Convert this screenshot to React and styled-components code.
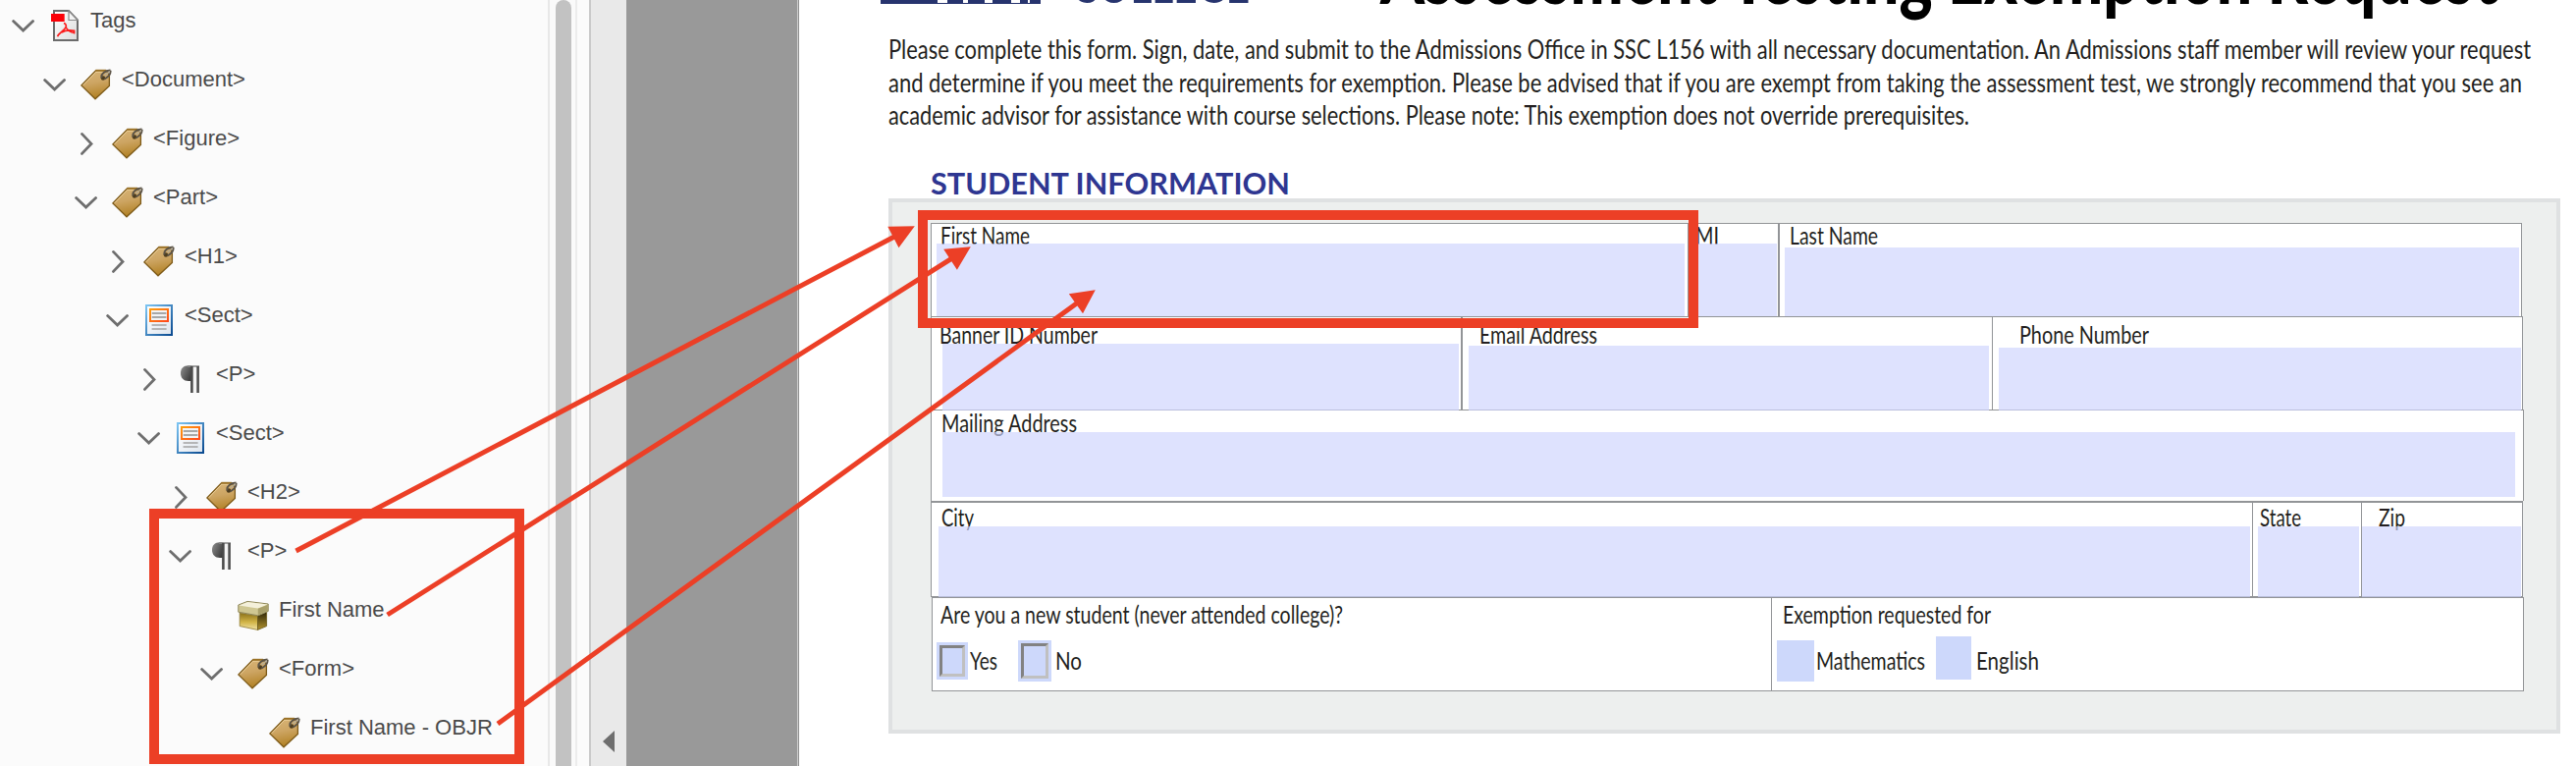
import React, { useLayoutEffect, useRef, useState } from "react";
import styled, { createGlobalStyle } from "styled-components";

const RED = "#ec3f26";

const GlobalStyle = createGlobalStyle`
  * { box-sizing: border-box; }
  html, body { margin: 0; padding: 0; background: #fff; overflow: hidden; }
`;

const Window = styled.div`
  position: relative;
  display: flex;
  width: 2624px;
  height: 780px;
  overflow: hidden;
  background: #fff;
`;

/* ---------- tags tree ---------- */

const TreePanel = styled.aside`
  width: 558px;
  height: 780px;
  flex: none;
  background: #fbfbfb;
  overflow: hidden;
`;

const TreeList = styled.div`
  display: flex;
  flex-direction: column;
  margin-top: -4px;
`;

const TreeRow = styled.div`
  display: flex;
  align-items: center;
  height: 60px;
  flex: none;
  padding-left: ${(p) => 12 + p.$level * 32}px;
`;

const ChevronBox = styled.svg`
  width: 24px;
  height: 24px;
  flex: none;
  margin-right: 14px;
`;

const IconBox = styled.svg`
  width: 32px;
  height: 32px;
  flex: none;
  margin-right: 10px;
`;

const TreeLabel = styled.span`
  font: 22px/26px "Liberation Sans", Arial, sans-serif;
  color: #4a4a4a;
  white-space: nowrap;
  margin-top: -10px;
`;

const Chevron = ({ state }) => (
  <ChevronBox viewBox="0 0 24 24" fill="none" stroke="#6e6e6e" strokeWidth="2.8" strokeLinecap="round">
    {state === "open" && <path d="M1.6 7.6 L11.6 17 L21.6 7.6" />}
    {state === "closed" && <path d="M7.5 2.4 L17 12.4 L7.5 22.4" />}
  </ChevronBox>
);

const TagIcon = () => (
  <IconBox viewBox="0 0 32 32">
    <defs>
      <linearGradient id="tagFill" x1="0" y1="0" x2="0.2" y2="1">
        <stop offset="0" stopColor="#d9b679" />
        <stop offset="0.5" stopColor="#cda563" />
        <stop offset="1" stopColor="#b38328" />
      </linearGradient>
    </defs>
    <path d="M.9 17 L15.5 1.8 H26 L29.4 6 V17.5 L15 30.8 Z" fill="url(#tagFill)" stroke="#7d5a18" strokeWidth="1.3" />
    <path d="M2.6 16.8 L15.8 3.2 H24" fill="none" stroke="#ecd09a" strokeWidth="1" />
    <path d="M15.5 1.7 H26" stroke="#9a7124" strokeWidth="1.8" />
    <circle cx="23" cy="9.5" r="2.2" fill="#4d3c1c" />
    <path d="M21.5 9.5 C20.5 5 25 2 30.5 1.6 M24.5 10.5 C29 8 31 5.5 30.5 1.8" fill="none" stroke="#5b5346" strokeWidth="2" />
    <path d="M24.5 7 L29.8 2.6" stroke="#b5ac98" strokeWidth="1.4" />
  </IconBox>
);

const PdfIcon = () => (
  <IconBox viewBox="0 0 32 32">
    <defs>
      <linearGradient id="pdfFill" x1="0" y1="0" x2="1" y2="1">
        <stop offset="0" stopColor="#ffffff" />
        <stop offset="1" stopColor="#dcdcdc" />
      </linearGradient>
    </defs>
    <path d="M5 1 H20 L29 10.5 V31 H5 Z" fill="url(#pdfFill)" stroke="#6b6b6b" strokeWidth="2" />
    <path d="M20 1 V10.5 H29 Z" fill="#f4f4f4" stroke="#8a8a8a" strokeWidth="1.2" />
    <rect x="2" y="4" width="13.7" height="8" fill="#fb0007" />
    <path d="M8.6 27.2 C10 23 15 22.5 17.4 17 C17.4 15 16.6 14 15 13.5 M17 17.5 C19 21.5 21 23 25.8 23.4 M12.8 23.2 C16 21 21 20.4 25.8 21.4 M25.6 20.6 V24.4" fill="none" stroke="#fb1b1b" strokeWidth="1.6" />
  </IconBox>
);

const SectIcon = () => (
  <IconBox viewBox="0 0 32 32">
    <defs>
      <linearGradient id="sectEdge" x1="0" y1="0" x2="1" y2="1">
        <stop offset="0" stopColor="#7cc4f2" />
        <stop offset="1" stopColor="#0a4a90" />
      </linearGradient>
      <linearGradient id="sectFill" x1="0" y1="0" x2="1" y2="1">
        <stop offset="0" stopColor="#ffffff" />
        <stop offset="1" stopColor="#dfe6ef" />
      </linearGradient>
      <linearGradient id="sectMark" x1="0" y1="0" x2="1" y2="1">
        <stop offset="0" stopColor="#ff9c0c" />
        <stop offset="1" stopColor="#ff4a1c" />
      </linearGradient>
    </defs>
    <rect x="3" y="1" width="26" height="30" fill="url(#sectFill)" stroke="url(#sectEdge)" strokeWidth="2" />
    <rect x="7" y="5" width="18" height="12" fill="#f3f4f6" stroke="url(#sectMark)" strokeWidth="2" />
    <path d="M8.8 9 H23.4 M8.8 13 H23.4" stroke="#8f8f8f" strokeWidth="1.7" />
    <path d="M8.6 21 H23.6 M8.6 25 H23.6" stroke="#a2a2a2" strokeWidth="1.7" />
  </IconBox>
);

const ParagraphIcon = () => (
  <IconBox viewBox="0 0 32 32">
    <defs>
      <linearGradient id="bowl" x1="0" y1="0" x2="1" y2="0.6">
        <stop offset="0" stopColor="#8f8f8f" />
        <stop offset="1" stopColor="#3e3e3e" />
      </linearGradient>
    </defs>
    <path d="M17.5 2.3 H14 C8.5 2.3 6 5.5 6 10 C6 14.8 9 18 14 18 H17.5 Z" fill="url(#bowl)" />
    <path d="M13 3 H25" stroke="#8a8a8a" strokeWidth="1.6" />
    <path d="M17.4 3 V30" stroke="#4a4a4a" strokeWidth="2.6" />
    <path d="M23.6 3 V30" stroke="#4f4f4f" strokeWidth="2.6" />
    <path d="M20.4 4 V30" stroke="#f4f4f4" strokeWidth="2.8" />
  </IconBox>
);

const ContainerIcon = () => (
  <IconBox viewBox="0 0 32 32">
    <defs>
      <linearGradient id="boxFront" x1="0" y1="0" x2="0" y2="1">
        <stop offset="0" stopColor="#8a7018" />
        <stop offset="0.55" stopColor="#d2b548" />
        <stop offset="1" stopColor="#f0e2a6" />
      </linearGradient>
      <linearGradient id="boxSide" x1="0" y1="0" x2="0" y2="1">
        <stop offset="0" stopColor="#2d2508" />
        <stop offset="1" stopColor="#b3942e" />
      </linearGradient>
    </defs>
    <path d="M2.2 14 L20.5 17 V31.4 L2.2 27.6 Z" fill="url(#boxFront)" stroke="#8d7830" strokeWidth=".8" />
    <path d="M20.5 17 L29.6 13 V27.6 L20.5 31.4 Z" fill="url(#boxSide)" stroke="#6b5a1c" strokeWidth=".8" />
    <path d="M.8 6 L10 2.4 L31.2 5 V12.4 L20.8 16.8 L.8 13.2 Z" fill="#cfc792" stroke="#8f875a" strokeWidth="1" />
    <path d="M1.4 6.4 L10.4 3 L30.6 5.4 L20.8 9.6 Z" fill="#f4f0da" />
    <path d="M20.8 9.8 L30.8 5.8 V12 L20.8 16 Z" fill="#a9a06a" />
  </IconBox>
);

const icons = { tag: TagIcon, pdf: PdfIcon, sect: SectIcon, p: ParagraphIcon, box: ContainerIcon };

const nodes = [
  [0, "open", "pdf", "Tags"],
  [1, "open", "tag", "<Document>"],
  [2, "closed", "tag", "<Figure>"],
  [2, "open", "tag", "<Part>"],
  [3, "closed", "tag", "<H1>"],
  [3, "open", "sect", "<Sect>"],
  [4, "closed", "p", "<P>"],
  [4, "open", "sect", "<Sect>"],
  [5, "closed", "tag", "<H2>"],
  [5, "open", "p", "<P>"],
  [6, "none", "box", "First Name"],
  [6, "open", "tag", "<Form>"],
  [7, "none", "tag", "First Name - OBJR"],
];

/* ---------- scroll bar and collapsed gutter ---------- */

const ScrollTrack = styled.div`
  width: 30px;
  flex: none;
  padding: 0 4px 0 6px;
  background: #fafafa;
  border-left: 2px solid #e8e8e8;
  border-right: 2px solid #ececec;
`;

const ScrollThumb = styled.div`
  width: 16px;
  height: 800px;
  border-radius: 8px;
  background: #c2c2c2;
`;

const PanelEdge = styled.div`
  width: 14px;
  flex: none;
  background: #fbfbfb;
  border-right: 2px solid #c9c9c9;
`;

const Gutter = styled.div`
  width: 36px;
  flex: none;
  padding: 744px 0 0 12px;
  background: #e9e9e9;
`;

const CollapseArrow = styled.svg`
  display: block;
  width: 12px;
  height: 22px;
`;

const Backdrop = styled.div`
  width: 176px;
  flex: none;
  background: #999;
  border-right: 1px solid #8f8f8f;
  box-shadow: inset -1px 0 0 #cfcfcf;
`;

/* ---------- form page ---------- */

const FONT = `Lato, "Open Sans", sans-serif`;

const Page = styled.main`
  width: 1810px;
  flex: none;
  display: flex;
  flex-direction: column;
  background: #fff;
  font-family: ${FONT};
  color: #231f20;
`;

const FittedSpan = styled.span`
  display: block;
  width: max-content;
  white-space: nowrap;
  transform-origin: 0 50%;
`;

/* Condenses a line of text horizontally to the given width. */
const Fitted = ({ width, children }) => {
  const ref = useRef(null);
  const [scale, setScale] = useState(1);
  useLayoutEffect(() => {
    const natural = parseFloat(getComputedStyle(ref.current).width);
    setScale(width / natural);
  }, [width, children]);
  return (
    <FittedSpan ref={ref} style={{ transform: `scaleX(${scale})` }}>
      {children}
    </FittedSpan>
  );
};

const Masthead = styled.header`
  display: flex;
  align-items: flex-start;
  height: 33px;
  flex: none;
  padding-left: 83px;
`;

const LogoBlock = styled.svg`
  width: 163px;
  height: 4px;
  flex: none;
`;

const Wordmark = styled.div`
  width: 180px;
  flex: none;
  margin: -46px 0 0 31px;
  font-size: 56px;
  font-weight: 900;
  line-height: 56px;
  color: #27346e;
`;

const Title = styled.h1`
  width: 1138px;
  flex: none;
  margin: -74px 0 0 135px;
  font-size: 88px;
  font-weight: 900;
  line-height: 88px;
  color: #000;
`;

const Intro = styled.div`
  flex: none;
  height: 101px;
  margin-left: 91px;
  font-size: 27px;
  line-height: 33.5px;
`;

const SectionHeading = styled.h2`
  flex: none;
  height: 34px;
  margin: 34px 0 0 134px;
  font-size: 30.5px;
  font-weight: 700;
  line-height: 36px;
  color: #2e3691;
`;

const Panel = styled.section`
  width: 1703px;
  height: 545px;
  flex: none;
  margin-left: 91px;
  padding: 21px 0 0 39px;
  background: #edefee;
  border: 4px solid #dfe1e2;
`;

const FormRow = styled.div`
  display: grid;
  grid-template-columns: ${(p) => p.$columns};
  width: ${(p) => p.$width}px;
  height: ${(p) => p.$height}px;
  margin-left: ${(p) => p.$indent || 0}px;
  background: #fff;
  border: 1px solid #929497;
  border-top-width: ${(p) => p.$top || 1}px;
  border-bottom-width: ${(p) => p.$bottom || 0}px;
`;

const Cell = styled.div`
  display: grid;
  grid-template: minmax(0, 1fr) / minmax(0, 1fr);
  border-right: ${(p) => p.$rule || 0}px solid #929497;
`;

const Label = styled.div`
  grid-area: 1 / 1;
  align-self: start;
  margin: ${(p) => p.$top}px 0 0 ${(p) => p.$left}px;
  font-size: 24.5px;
  line-height: 30px;
`;

const Field = styled.div`
  grid-area: 1 / 1;
  position: relative;
  z-index: 1;
  margin: ${(p) => p.$inset};
  background: rgba(206, 212, 254, 0.67);
`;

const Choices = styled.div`
  grid-area: 1 / 1;
  display: flex;
  align-items: flex-start;
  padding: ${(p) => p.$pad};
`;

const ChoiceLabel = styled.div`
  width: ${(p) => p.$width}px;
  flex: none;
  margin: ${(p) => p.$margin};
  font-size: 24.5px;
  line-height: 30px;
`;

const CheckBox = styled.div`
  width: ${(p) => p.$width}px;
  height: ${(p) => p.$height}px;
  flex: none;
  margin-top: ${(p) => p.$top}px;
  padding: 3px;
  background: #cdd8fb;
`;

const Bevel = styled.div`
  height: 100%;
  border: 3px solid;
  border-color: #828282 #c0c0c0 #c0c0c0 #828282;
`;

/* ---------- annotations over the page ---------- */

const Highlight = styled.div`
  position: absolute;
  left: ${(p) => p.$x}px;
  top: ${(p) => p.$y}px;
  width: ${(p) => p.$w}px;
  height: ${(p) => p.$h}px;
  border: 10px solid ${RED};
  z-index: 3;
`;

const Arrows = styled.svg`
  position: absolute;
  left: 0;
  top: 0;
  width: 2624px;
  height: 780px;
  z-index: 3;
  pointer-events: none;
`;

const Caption = ({ x, y, width, children }) => (
  <Label $left={x} $top={y}>
    <Fitted width={width}>{children}</Fitted>
  </Label>
);

export default function App() {
  return (
    <Window>
      <GlobalStyle />
      <TreePanel>
        <TreeList>
          {nodes.map(([level, state, icon, text], i) => {
            const Icon = icons[icon];
            return (
              <TreeRow key={i} $level={level}>
                <Chevron state={state} />
                <Icon />
                <TreeLabel>{text}</TreeLabel>
              </TreeRow>
            );
          })}
        </TreeList>
      </TreePanel>
      <ScrollTrack>
        <ScrollThumb />
      </ScrollTrack>
      <PanelEdge />
      <Gutter>
        <CollapseArrow viewBox="0 0 12 22">
          <path d="M0 11 L12 0 V22 Z" fill="#6e6e6e" />
        </CollapseArrow>
      </Gutter>
      <Backdrop />

      <Page>
        <Masthead>
          <LogoBlock viewBox="0 0 163 4">
            <rect width="163" height="4" fill="#27346e" />
            <path d="M58 0 h10 v3 h-10 z M84 0 h5 v3 h-5 z M106 0 h8 v3 h-8 z M133 0 h9 v3 h-9 z M150 0 h2 v3 h-2 z" fill="#fff" />
          </LogoBlock>
          <Wordmark><Fitted width={182}>COLLEGE</Fitted></Wordmark>
          <Title><Fitted width={1138}>Assessment Testing Exemption Request</Fitted></Title>
        </Masthead>

        <Intro>
          <Fitted width={1673}>Please complete this form. Sign, date, and submit to the Admissions Office in SSC L156 with all necessary documentation. An Admissions staff member will review your request</Fitted>
          <Fitted width={1664}>and determine if you meet the requirements for exemption. Please be advised that if you are exempt from taking the assessment test, we strongly recommend that you see an</Fitted>
          <Fitted width={1101}>academic advisor for assistance with course selections. Please note: This exemption does not override prerequisites.</Fitted>
        </Intro>

        <SectionHeading><Fitted width={366}>STUDENT INFORMATION</Fitted></SectionHeading>

        <Panel>
          <FormRow $columns="771px 93px 1fr" $width={1621} $height={95}>
            <Cell $rule={1}>
              <Caption x={9} y={-3} width={91}>First Name</Caption>
              <Field $inset="20px 3px 0 5px" />
            </Cell>
            <Cell $rule={2}>
              <Caption x={7} y={-3} width={24}>MI</Caption>
              <Field $inset="20px 1px 0 4px" />
            </Cell>
            <Cell>
              <Caption x={10} y={-3} width={90}>Last Name</Caption>
              <Field $inset="24px 2px 0 5px" />
            </Cell>
          </FormRow>

          <FormRow $columns="541px 540px 1fr" $width={1622} $height={95}>
            <Cell $rule={2}>
              <Caption x={8} y={3} width={161}>Banner ID Number</Caption>
              <Field $inset="27px 2px -1px 11px" />
            </Cell>
            <Cell $rule={1}>
              <Caption x={17} y={3} width={120}>Email Address</Caption>
              <Field $inset="29px 3px -1px 6px" />
            </Cell>
            <Cell>
              <Caption x={27} y={3} width={132}>Phone Number</Caption>
              <Field $inset="31px 1px -1px 6px" />
            </Cell>
          </FormRow>

          <FormRow $columns="1fr" $width={1623} $height={93}>
            <Cell>
              <Caption x={10} y={-2} width={138}>Mailing Address</Caption>
              <Field $inset="22px 8px 4px 11px" />
            </Cell>
          </FormRow>

          <FormRow $columns="1346px 111px 1fr" $width={1622} $height={98} $top={2} $bottom={1}>
            <Cell $rule={1}>
              <Caption x={10} y={0} width={33}>City</Caption>
              <Field $inset="24px 2px -1px 7px" />
            </Cell>
            <Cell $rule={1}>
              <Caption x={7} y={0} width={42}>State</Caption>
              <Field $inset="24px 2px -1px 5px" />
            </Cell>
            <Cell>
              <Caption x={17} y={0} width={27}>Zip</Caption>
              <Field $inset="24px 1px -1px 0" />
            </Cell>
          </FormRow>

          <FormRow $columns="855px 1fr" $width={1622} $height={96} $indent={1} $bottom={1}>
            <Cell $rule={1}>
              <Caption x={8} y={2} width={410}>Are you a new student (never attended college)?</Caption>
              <Choices $pad="43px 0 0 4px">
                <CheckBox $width={32} $height={38} $top={2}><Bevel /></CheckBox>
                <ChoiceLabel $width={28} $margin="6px 21px 0 2px"><Fitted width={28}>Yes</Fitted></ChoiceLabel>
                <CheckBox $width={34} $height={42} $top={0}><Bevel /></CheckBox>
                <ChoiceLabel $width={28} $margin="6px 0 0 4px"><Fitted width={27}>No</Fitted></ChoiceLabel>
              </Choices>
            </Cell>
            <Cell>
              <Caption x={11} y={2} width={212}>Exemption requested for</Caption>
              <Choices $pad="39px 0 0 5px">
                <CheckBox $width={38} $height={42} $top={4} />
                <ChoiceLabel $width={112} $margin="10px 10px 0 2px"><Fitted width={111}>Mathematics</Fitted></ChoiceLabel>
                <CheckBox $width={36} $height={44} $top={0} />
                <ChoiceLabel $width={65} $margin="10px 0 0 5px"><Fitted width={64}>English</Fitted></ChoiceLabel>
              </Choices>
            </Cell>
          </FormRow>
        </Panel>
      </Page>

      <Highlight $x={152} $y={518} $w={382} $h={260} />
      <Highlight $x={935} $y={214} $w={795} $h={120} />
      <Arrows viewBox="0 0 2624 780" fill={RED} stroke={RED}>
        <path d="M301.5 561 L912 240.5 M394.6 626 L970 262.8 M507 737 L1098 308" fill="none" strokeWidth="5" />
        <path d="M931.8 230.3 L904.3 230.8 L915.5 252.3 Z M988.8 251.3 L961.2 253.8 L974.9 274.7 Z M1115.8 295.3 L1088.8 299.3 L1103 319.3 Z" stroke="none" />
      </Arrows>
    </Window>
  );
}
